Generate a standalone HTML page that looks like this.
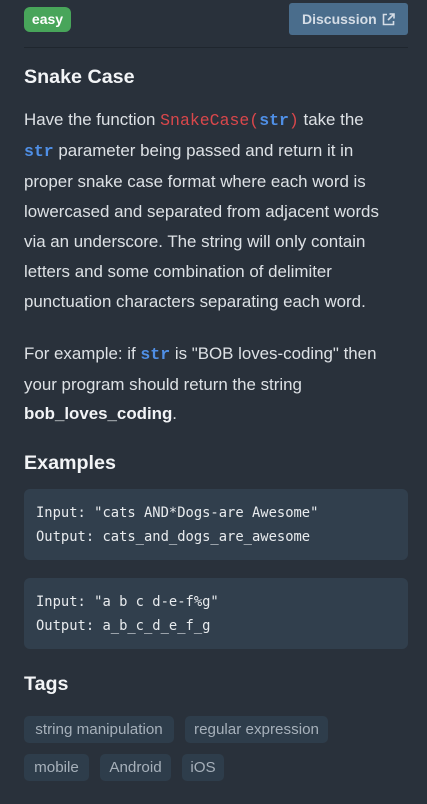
<!DOCTYPE html>
<html><head><meta charset="utf-8"><style>
*{margin:0;padding:0;box-sizing:border-box}
body{width:427px;height:804px;background:#29313b;font-family:"Liberation Sans",sans-serif;color:#e3e6ea;position:relative;overflow:hidden}
.badge{position:absolute;left:24px;top:7px;width:47px;height:25px;background:#48a55a;border-radius:6px;color:#fff;font-size:14px;font-weight:bold;line-height:25px;text-align:center}
.btn{position:absolute;left:289px;top:3px;width:119px;height:32px;background:#4a6d8c;border-radius:3px;color:#d5dde6;font-size:14px;font-weight:bold;line-height:32px;padding-left:13px}
.btn svg{position:absolute;left:93px;top:10px}
.hr{position:absolute;left:24px;top:47px;width:384px;height:1px;background:#1f262e}
h2{position:absolute;left:24px;font-size:19.7px;font-weight:bold;color:#f2f4f6}
.p{position:absolute;left:24px;font-size:16.9px;line-height:30px;white-space:nowrap;color:#dde1e5}
.r{color:#d9474b;font-family:"Liberation Mono",monospace;font-size:16.5px}
.b{color:#4f8fe6;font-family:"Liberation Mono",monospace;font-weight:bold;font-size:16.5px}
.code{position:absolute;left:24px;width:384px;height:71px;background:#313f4d;border-radius:6px;font-family:"DejaVu Sans Mono",monospace;font-size:13.8px;line-height:24px;color:#e8ebee;padding:12px 12px}
.tag{position:absolute;height:27px;background:#2e3d4b;border-radius:5px;color:#a6b0ba;font-size:15.2px;line-height:27px;text-align:center;white-space:nowrap}
</style></head><body>
<div class="badge">easy</div>
<div class="btn">Discussion<svg width="13" height="13" viewBox="0 0 13 13" fill="none" stroke="#d5dde6" stroke-width="1.6"><path d="M5 1.5H1.5v10h10V8"/><path d="M7.5 1h4.5v4.5M12 1L6 7"/></svg></div>
<div class="hr"></div>
<h2 style="top:66px">Snake Case</h2>
<div class="p" style="top:105px">Have the function <span class="r">SnakeCase(<span class="b">str</span>)</span> take the<br><span class="b">str</span> parameter being passed and return it in<br>proper snake case format where each word is<br>lowercased and separated from adjacent words<br>via an underscore. The string will only contain<br>letters and some combination of delimiter<br>punctuation characters separating each word.</div>
<div class="p" style="top:339px;line-height:29.5px">For example: if <span class="b">str</span> is "BOB loves-coding" then<br>your program should return the string<br><b style="color:#f2f4f6">bob_loves_coding</b>.</div>
<h2 style="top:452px">Examples</h2>
<div class="code" style="top:489px">Input: "cats AND*Dogs-are Awesome"<br>Output: cats_and_dogs_are_awesome</div>
<div class="code" style="top:578px">Input: "a b c d-e-f%g"<br>Output: a_b_c_d_e_f_g</div>
<h2 style="top:673px">Tags</h2>
<div class="tag" style="left:24px;top:716px;width:150px">string manipulation</div>
<div class="tag" style="left:185px;top:716px;width:143px">regular expression</div>
<div class="tag" style="left:24px;top:754px;width:65px">mobile</div>
<div class="tag" style="left:100px;top:754px;width:71px">Android</div>
<div class="tag" style="left:182px;top:754px;width:42px">iOS</div>
</body></html>
